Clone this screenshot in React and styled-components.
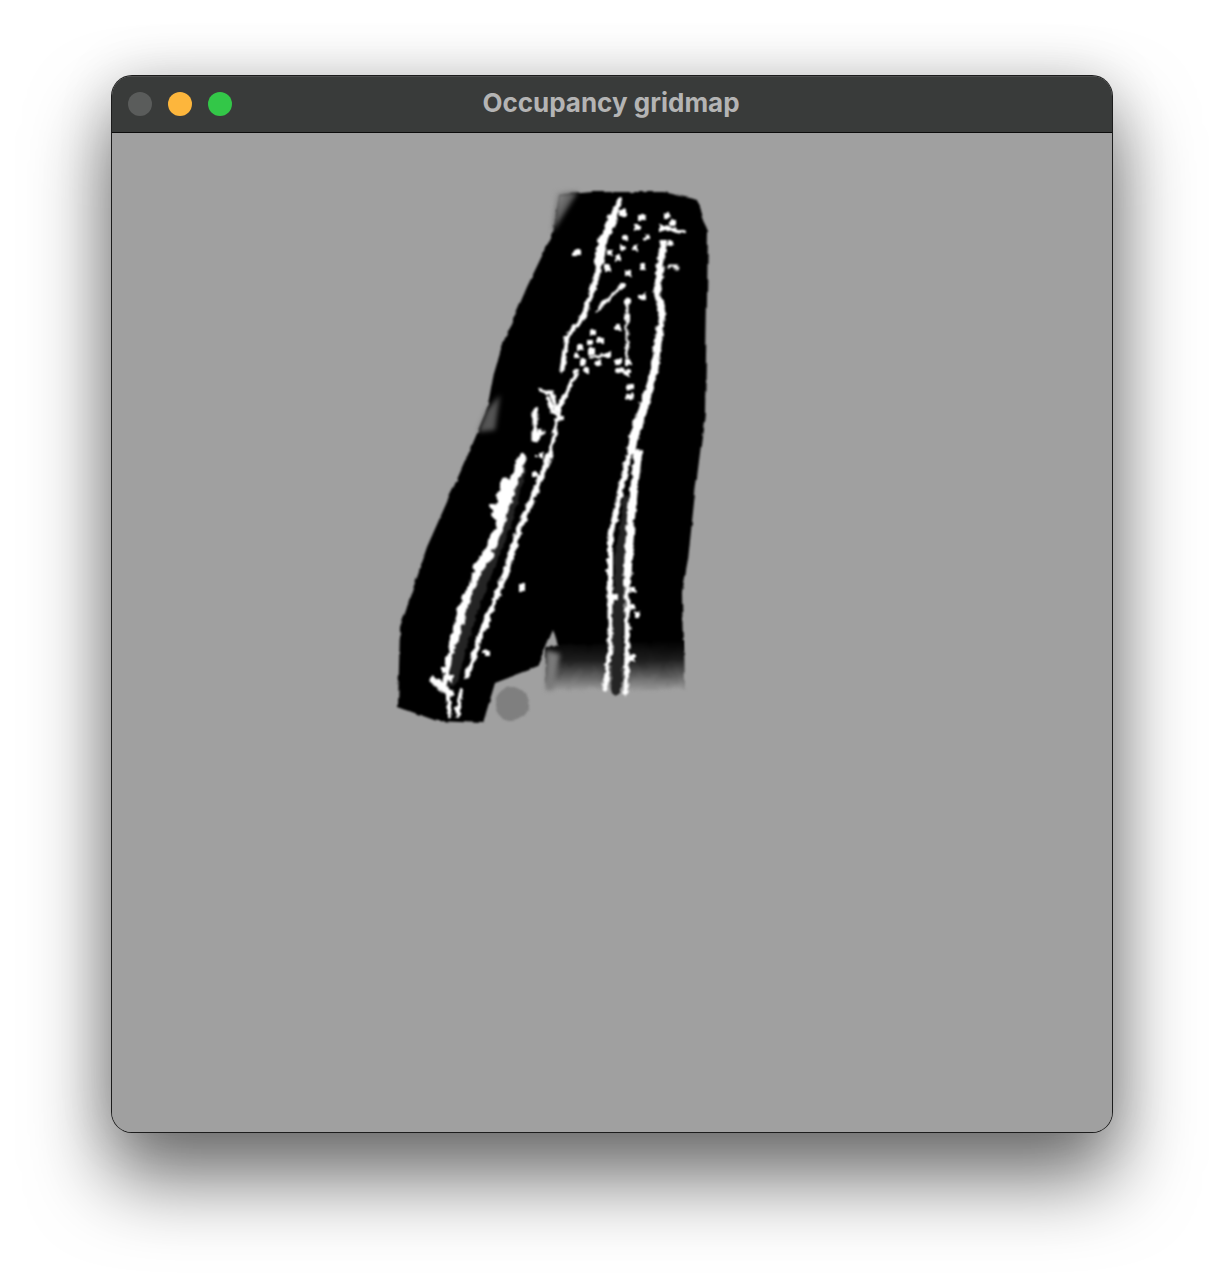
import styled, { createGlobalStyle } from "styled-components";

const GlobalStyle = createGlobalStyle`
  html, body {
    margin: 0;
    background: #ffffff;
  }
`;

const Page = styled.div`
  width: 1224px;
  height: 1280px;
  padding: 76px 112px 0;
  box-sizing: border-box;
  overflow: hidden;
`;

const Window = styled.div`
  width: 1000px;
  height: 1056px;
  border-radius: 20px;
  overflow: hidden;
  display: flex;
  flex-direction: column;
  box-shadow: 0 0 0 1px #1c1c1c, 0 44px 78px 4px rgba(0, 0, 0, 0.55), 0 0 56px rgba(0, 0, 0, 0.14);
  background: #a0a0a0;
`;

const TitleBar = styled.div`
  position: relative;
  flex: 0 0 57px;
  box-sizing: border-box;
  display: flex;
  align-items: center;
  justify-content: center;
  background: #393b3a;
  border-bottom: 1px solid #0c0c0c;
  box-shadow: inset 0 1px 0 #4e4e4e;
`;

const Lights = styled.div`
  position: absolute;
  left: 16px;
  top: 16px;
  display: flex;
  gap: 16px;
`;

const Light = styled.span`
  width: 24px;
  height: 24px;
  border-radius: 50%;
  background: ${(p) => p.$color};
`;

const Title = styled.span`
  font-family: Inter, "Liberation Sans", sans-serif;
  font-weight: 700;
  font-size: 26px;
  line-height: 28px;
  margin-left: -2px;
  margin-top: -2px;
  color: #b4b4b4;
`;

const Content = styled.div`
  flex: 1;
  background: #a0a0a0;
`;

const Map = styled.svg`
  display: block;
`;

const leftBody =
  "M560,195 L592,192 L664,192 L697,200 L708,230 L707,300 L705,413 L695,493 L688,560 L682,593 L683,650 L640,650 L560,652 L553,630 L537,667 L495,683 L483,723 L437,721 L398,707 L400,627 L427,547 L467,457 L487,410 L493,377 L503,343 L527,287 L553,233 Z";

const under = [
  { w: 12, d: "M520,470 L505,525 L485,575 L465,630 L452,680" },
  { w: 10, d: "M628,500 L620,560 L618,640 L616,690" },
];

const strokes = [
  { w: 8, d: "M523,457 L513,483 L497,533 L480,567 L463,607 L453,643" },
  { w: 5, d: "M453,643 L445,680 L450,716" },
  { w: 6, d: "M550,453 L537,487 L520,527 L503,580 L480,637" },
  { w: 5, d: "M480,637 L467,677" },
  { w: 4, d: "M461,690 L457,716" },
  { w: 6, d: "M630,450 L620,493 L610,540 L610,583" },
  { w: 5, d: "M610,583 L610,650 L605,690" },
  { w: 8, d: "M638,453 L631,517 L627,583" },
  { w: 5, d: "M627,583 L627,650 L626,692" },
  { w: 7, d: "M663,245 L657,290 L662,313 L655,367 L648,392" },
  { w: 9, d: "M648,392 L640,420 L633,440 L631,450" },
  { w: 6, d: "M620,200 L613,217" },
  { w: 9, d: "M613,217 L603,240 L599,262" },
  { w: 5, d: "M599,262 L597,277 L583,317" },
  { w: 5, d: "M583,317 L567,337 L562,370" },
  { w: 4, d: "M577,370 L560,407 L550,457" },
  { w: 3, d: "M627,300 L627,357" },
  { w: 3, d: "M620,287 L597,310" },
  { w: 5, d: "M535,410 L535,440 L541,432" },
  { w: 4, d: "M540,390 L552,393 L556,410 L565,395" },
  { w: 4, d: "M548,398 L552,412 L562,418" },
  { w: 6, d: "M493,507 L505,503 L513,480" },
  { w: 11, d: "M507,482 L498,515" },
  { w: 9, d: "M477,567 L490,555" },
  { w: 7, d: "M433,680 L450,693" },
  { w: 4, d: "M663,228 L683,232" },
  { w: 3, d: "M668,267 L678,267" },
  { w: 3, d: "M590,358 L607,355" },
  { w: 4, d: "M617,370 L626,371" },
];

const dots = [
  [577, 253], [623, 213], [642, 217], [667, 215], [673, 223], [663, 228], [638, 227], [625, 238],
  [647, 237], [635, 248], [623, 248], [618, 258], [643, 267], [628, 273], [622, 285], [642, 297],
  [628, 302], [627, 317], [618, 327], [593, 332], [590, 343], [600, 340], [592, 352], [580, 347],
  [577, 355], [583, 362], [598, 363], [607, 355], [618, 362], [628, 362], [627, 373], [587, 370],
  [630, 387], [630, 397], [663, 243], [670, 242], [522, 587], [487, 653], [445, 670], [448, 660],
  [450, 678], [637, 615], [633, 590], [632, 658], [615, 598], [633, 607], [535, 475], [610, 253],
  [607, 268], [540, 455],
];

const GridMap = () => (
  <Map width="1000" height="998" viewBox="112 133 1000 998">
    <defs>
      <linearGradient id="fade" x1="0" y1="0" x2="0" y2="1">
        <stop offset="0" stopColor="#000000" />
        <stop offset="0.4" stopColor="#1e1e1e" />
        <stop offset="0.78" stopColor="#6e6e6e" />
        <stop offset="1" stopColor="#a0a0a0" />
      </linearGradient>
      <linearGradient id="corner" x1="0" y1="0" x2="1" y2="1">
        <stop offset="0" stopColor="#a0a0a0" />
        <stop offset="1" stopColor="#000000" />
      </linearGradient>
      <filter id="edge" x="-5%" y="-5%" width="110%" height="110%" colorInterpolationFilters="sRGB">
        <feTurbulence type="fractalNoise" baseFrequency="0.07" numOctaves="2" seed="4" result="n" />
        <feDisplacementMap in="SourceGraphic" in2="n" scale="4" xChannelSelector="R" yChannelSelector="G" />
        <feGaussianBlur stdDeviation="1.3" />
      </filter>
      <filter id="rough" x="-5%" y="-5%" width="110%" height="110%" colorInterpolationFilters="sRGB">
        <feTurbulence type="fractalNoise" baseFrequency="0.16" numOctaves="2" seed="9" result="n" />
        <feDisplacementMap in="SourceGraphic" in2="n" scale="6" xChannelSelector="R" yChannelSelector="G" />
        <feGaussianBlur stdDeviation="1.1" />
      </filter>
      <filter id="softer" x="-30%" y="-30%" width="160%" height="160%" colorInterpolationFilters="sRGB">
        <feGaussianBlur stdDeviation="2.5" />
      </filter>
    </defs>
    <path d={leftBody} fill="#000000" filter="url(#edge)" />
    <path d="M546,646 L684,640 L685,690 L546,691 Z" fill="url(#fade)" filter="url(#edge)" />
    <path d="M546,650 L560,654 L553,690 L546,690 Z" fill="#7a7a7a" filter="url(#softer)" />
    <path d="M557,193 L578,192 L553,232 Z" fill="url(#corner)" filter="url(#softer)" />
    <path d="M487,410 L500,395 L495,430 L478,432 Z" fill="#555555" filter="url(#softer)" />
    <circle cx="512" cy="704" r="17" fill="#7f7f7f" filter="url(#edge)" />
    <g filter="url(#rough)">
      {under.map((s) => (
        <path key={s.d} d={s.d} fill="none" stroke="#242424" strokeWidth={s.w} strokeLinecap="round" />
      ))}
      {strokes.map((s) => (
        <path
          key={s.d}
          d={s.d}
          fill="none"
          stroke="#ffffff"
          strokeWidth={s.w}
          strokeLinejoin="round"
          strokeLinecap="round"
        />
      ))}
      {dots.map(([x, y]) => (
        <rect key={`${x}-${y}`} x={x - 3} y={y - 3} width="6" height="6" fill="#ffffff" />
      ))}
    </g>
  </Map>
);

export default function App() {
  return (
    <>
      <GlobalStyle />
      <Page>
        <Window>
          <TitleBar>
            <Lights>
              <Light $color="#5a5c5b" />
              <Light $color="#fdb63c" />
              <Light $color="#33c748" />
            </Lights>
            <Title>Occupancy gridmap</Title>
          </TitleBar>
          <Content>
            <GridMap />
          </Content>
        </Window>
      </Page>
    </>
  );
}
